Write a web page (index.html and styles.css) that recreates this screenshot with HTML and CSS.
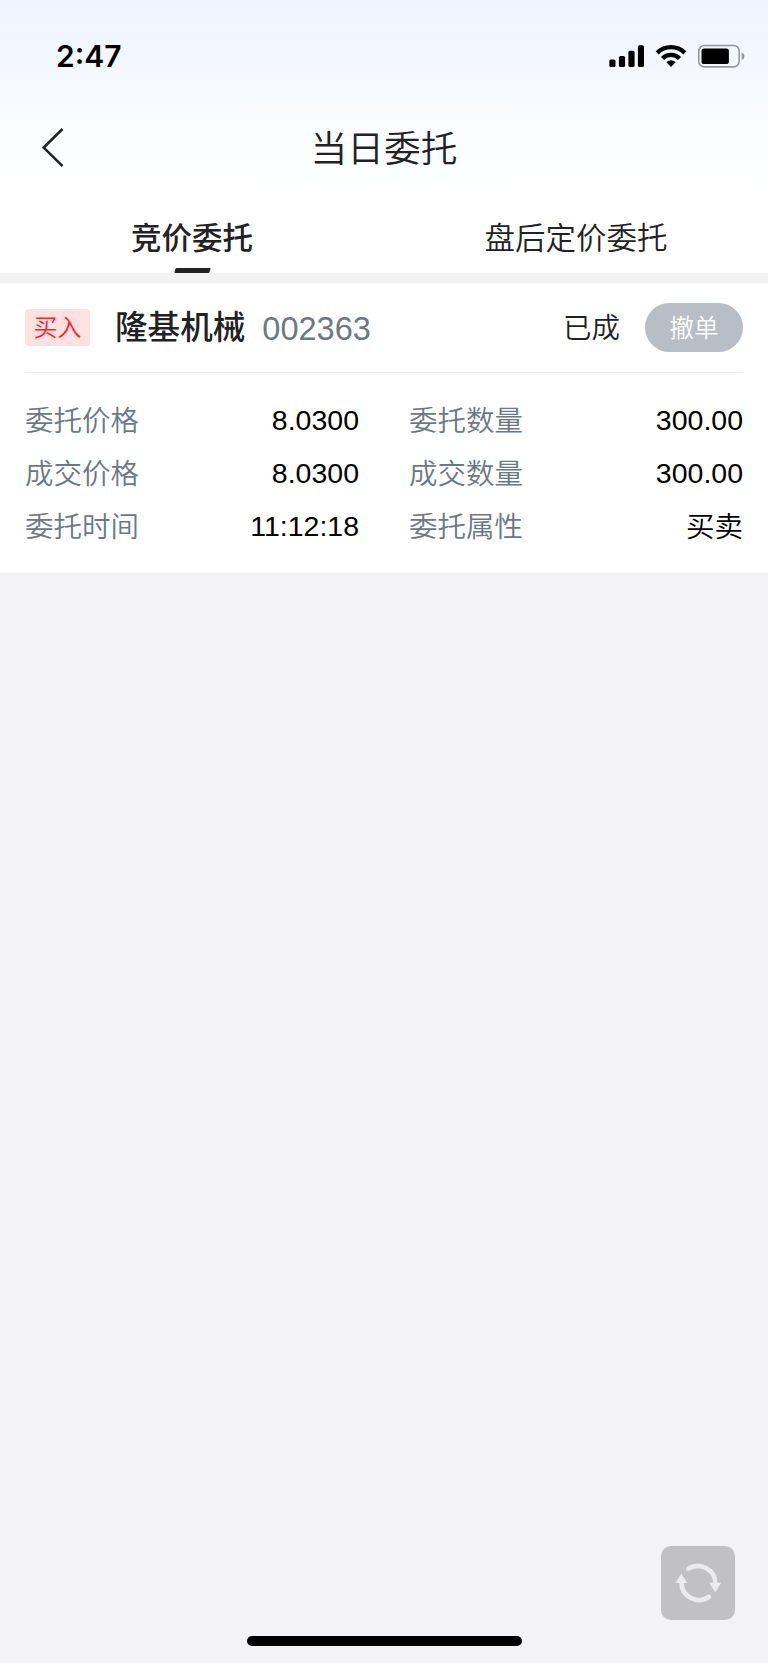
FILE: index.html
```html
<!DOCTYPE html>
<html lang="zh-CN">
<head>
<meta charset="UTF-8" />
<meta name="viewport" content="width=device-width, initial-scale=1" />
<title>当日委托</title>
<link rel="stylesheet" href="styles.css">
</head>
<body>
  <div class="app">
    <header class="header">
      <div class="status-bar">
        <span class="time">2:47</span>
        <div class="status-icons">
          <svg width="35" height="24" viewBox="0 0 35 24" aria-hidden="true">
            <rect x="0.3" y="15.5" width="6.2" height="7.5" rx="1.6" />
            <rect x="9.9" y="12" width="6.2" height="11" rx="1.6" />
            <rect x="19.4" y="6.8" width="6.2" height="16.2" rx="1.6" />
            <rect x="28.9" y="1.2" width="6.1" height="21.8" rx="1.6" />
          </svg>
          <svg width="32" height="24" viewBox="0 0 32 24" fill="none" stroke="#000" stroke-width="4.3" aria-hidden="true">
            <path d="M2.2 8.9a19.6 19.6 0 0 1 27.6 0" />
            <path d="M7.5 14.4a12 12 0 0 1 17 0" />
            <path d="M16 23l-4.6-4.8a6.7 6.7 0 0 1 9.2 0z" fill="#000" stroke="none" />
          </svg>
          <svg width="48" height="24" viewBox="0 0 48 24" aria-hidden="true">
            <rect x="0.8" y="1.5" width="40.4" height="21.4" rx="5.6" fill="none" stroke="#94979b" stroke-width="1.6" />
            <rect x="3.5" y="4.4" width="27.4" height="15.6" rx="2.6" />
            <path d="M43.7 8.2c3.6 1.6 3.6 6.4 0 8z" fill="#94979b" />
          </svg>
        </div>
      </div>
      <div class="nav">
        <button class="back" aria-label="返回">
          <svg width="24" height="40" viewBox="0 0 24 40" fill="none" stroke="#222" stroke-width="2.6" aria-hidden="true">
            <path d="M21.5 1L2.7 19.6l18.8 18.6" />
          </svg>
        </button>
        <h1>当日委托</h1>
      </div>
      <nav class="tabs">
        <a class="tab active">竞价委托</a>
        <a class="tab">盘后定价委托</a>
      </nav>
    </header>

    <main class="order">
      <div class="order-head">
        <span class="side">买入</span>
        <span class="name">隆基机械</span>
        <span class="code">002363</span>
        <span class="state">已成</span>
        <button class="cancel">撤单</button>
      </div>
      <dl class="detail">
        <div><dt>委托价格</dt><dd>8.0300</dd></div>
        <div><dt>委托数量</dt><dd>300.00</dd></div>
        <div><dt>成交价格</dt><dd>8.0300</dd></div>
        <div><dt>成交数量</dt><dd>300.00</dd></div>
        <div><dt>委托时间</dt><dd>11:12:18</dd></div>
        <div><dt>委托属性</dt><dd class="cjk">买卖</dd></div>
      </dl>
    </main>

    <footer class="footer">
      <button class="refresh" aria-label="刷新">
        <svg width="74" height="74" viewBox="0 0 74 74" aria-hidden="true">
          <g fill="none" stroke="#ebebec" stroke-width="4.6" stroke-linecap="round">
            <path d="M27.4 22.8a17.5 17.5 0 0 1 26.9 15.2" />
            <path d="M47.8 51a17.5 17.5 0 0 1-27.3-15" />
          </g>
          <path d="M48.3 36.8h11.8l-5.9 9.6z" fill="#ebebec" />
          <path d="M14.4 37h11.8l-5.9-9.6z" fill="#ebebec" />
        </svg>
      </button>
      <div class="home-bar"></div>
    </footer>
  </div>
</body>
</html>
```

FILE: styles.css
```css
* {
  box-sizing: border-box;
}
body {
  margin: 0;
  font-family: "Liberation Sans", "Noto Sans CJK SC", sans-serif;
  font-weight: 350;
  background: #f3f3f5;
  color: #222;
}
button {
  border: none;
  padding: 0;
  font-family: inherit;
  font-weight: inherit;
}
svg {
  display: block;
}
.app {
  display: flex;
  flex-direction: column;
  min-height: 1663px;
}

/* HEADER */
.header {
  height: 273px;
  background: linear-gradient(#eff4ff, #f2f7fe 50px, #f8fbff 105px, #fff 190px);
}
.status-bar {
  display: flex;
  justify-content: space-between;
  align-items: center;
  height: 112px;
  padding: 0 22px 0 56px;
}
.time {
  font-family: Inter, sans-serif;
  font-size: 30px;
  font-weight: 600;
  color: #000;
}
.status-icons {
  display: flex;
  gap: 11px;
}
.nav {
  display: grid;
  grid-template-columns: 100px 1fr 100px;
  align-items: center;
  height: 72px;
}
.back {
  padding-left: 41px;
  background: none;
}
.nav h1 {
  margin: 0;
  padding-top: 3px;
  font-size: 36.7px;
  font-weight: 350;
  line-height: 69px;
  text-align: center;
}
.tabs {
  display: grid;
  grid-template-columns: 1fr 1fr;
  height: 89px;
}
.tab {
  display: flex;
  flex-direction: column;
  align-items: center;
  justify-content: space-between;
  font-size: 30.5px;
  line-height: 44px;
  padding-top: 32px;
}
.tab.active {
  font-weight: 500;
}
.tab.active::after {
  content: "";
  width: 35px;
  height: 5px;
  background: #222;
  border-radius: 1px;
  transform: skewX(-18deg);
}

/* ORDER CARD */
.order {
  margin-top: 10px;
  height: 290px;
  padding: 0 25px;
  background: #fff;
}
.order-head {
  display: flex;
  align-items: center;
  height: 90px;
  border-bottom: 1px solid #ebecee;
}
.side {
  width: 65px;
  height: 37px;
  border-radius: 4px;
  background: #ffe2e0;
  color: #ff1f2b;
  font-size: 24px;
  line-height: 37px;
  text-align: center;
}
.name {
  margin-left: 25px;
  font-size: 32.6px;
  font-weight: 500;
  line-height: 48px;
}
.code {
  margin-left: 17px;
  padding-top: 3px;
  font-size: 32.5px;
  color: #6b7986;
}
.state {
  margin-left: auto;
  padding-bottom: 4px;
  font-size: 28.5px;
}
.cancel {
  width: 98px;
  height: 49px;
  margin-left: 25px;
  padding-bottom: 3px;
  border-radius: 25px;
  background: #b8bec5;
  color: #fff;
  font-size: 24.5px;
}
.detail {
  display: grid;
  grid-template-columns: 1fr 1fr;
  column-gap: 50px;
  margin: 0;
  padding-top: 21px;
}
.detail div {
  display: flex;
  justify-content: space-between;
  height: 53.2px;
  font-size: 28.5px;
  line-height: 53px;
}
.detail dt {
  padding-top: 1px;
  color: #6b7986;
}
.detail dd {
  margin: 0;
  color: #000;
}
.detail .cjk {
  padding-top: 1px;
}

/* FOOTER */
.footer {
  display: flex;
  flex-direction: column;
  align-items: center;
  margin-top: auto;
  padding-bottom: 17px;
}
.refresh {
  align-self: flex-end;
  width: 74px;
  height: 74px;
  margin: 0 33px 16px 0;
  border-radius: 10px;
  background: #c1c1c3;
}
.home-bar {
  width: 275px;
  height: 10px;
  border-radius: 5px;
  background: #000;
}
```
